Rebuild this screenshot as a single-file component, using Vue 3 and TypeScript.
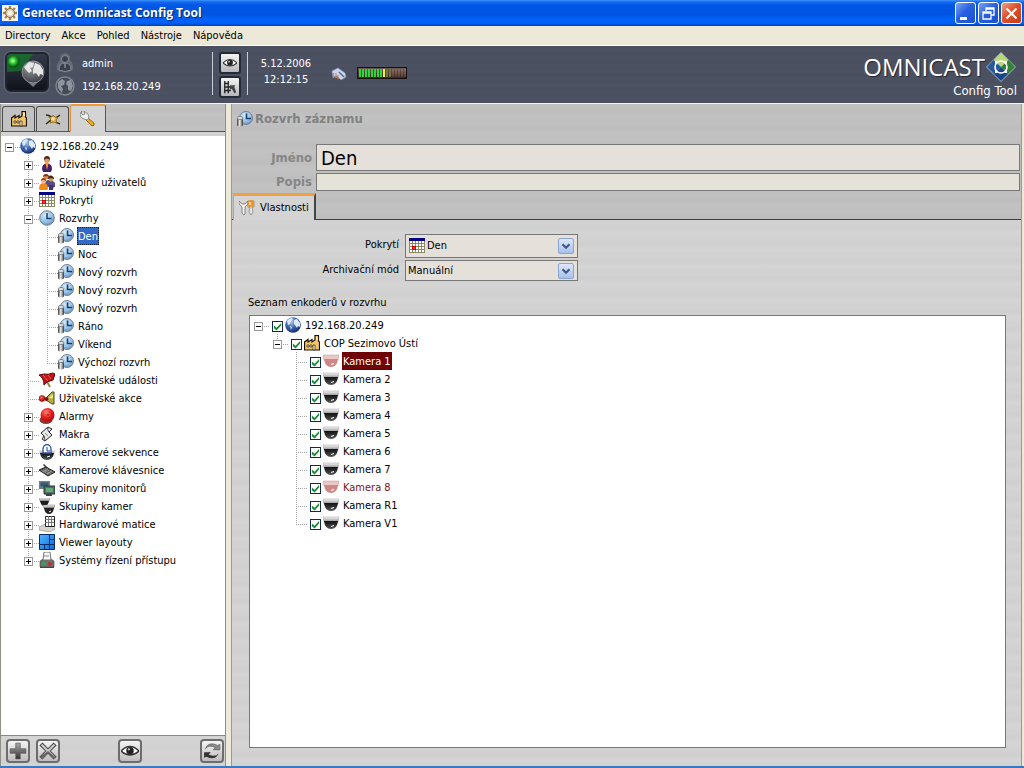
<script setup lang="ts">
import { computed, ref } from 'vue'

interface Node {
  text: string
  icon: string
  open?: boolean
  color?: string
  children?: Node[]
}
interface Row {
  text: string
  icon: string
  color: string
  level: number
  cells: string[]
  sign: string
}

const leaf = (text: string, icon: string, color = ''): Node => ({ text, icon, color })
const closed = (text: string, icon: string): Node => ({ text, icon, open: false, children: [] })

const directory: Node = {
  text: '192.168.20.249', icon: 'globe', open: true,
  children: [
    closed('Uživatelé', 'user'),
    closed('Skupiny uživatelů', 'users'),
    closed('Pokrytí', 'calendar'),
    {
      text: 'Rozvrhy', icon: 'clock', open: true,
      children: ['Den', 'Noc', 'Nový rozvrh', 'Nový rozvrh', 'Nový rozvrh', 'Ráno', 'Víkend', 'Výchozí rozvrh']
        .map((t) => leaf(t, 'schedule')),
    },
    leaf('Uživatelské události', 'flag'),
    leaf('Uživatelské akce', 'horn'),
    closed('Alarmy', 'alarm'),
    closed('Makra', 'macro'),
    closed('Kamerové sekvence', 'sequence'),
    closed('Kamerové klávesnice', 'keyboard'),
    closed('Skupiny monitorů', 'monitors'),
    closed('Skupiny kamer', 'domes'),
    closed('Hardwarové matice', 'matrix'),
    closed('Viewer layouty', 'layout'),
    closed('Systémy řízení přístupu', 'access'),
  ],
}

const encoders: Node = {
  text: '192.168.20.249', icon: 'globe', open: true,
  children: [
    {
      text: 'COP Sezimovo Ústí', icon: 'factory', open: true,
      children: ['1', '2', '3', '4', '5', '6', '7', '8', 'R1', 'V1'].map((n) => {
        const off = n === '1' || n === '8'
        return leaf(`Kamera ${n}`, off ? 'domeoff' : 'dome', off ? '#7d1416' : '')
      }),
    },
  ],
}

function flatten(node: Node, prefix: string[] = [], own = 'root'): Row[] {
  const row: Row = {
    text: node.text,
    icon: node.icon,
    color: node.color || '',
    level: prefix.length,
    cells: [...prefix, own],
    sign: node.children ? (node.open ? 'minus' : 'plus') : '',
  }
  const kids = node.open && node.children ? node.children : []
  const next = [...prefix, own === 'tee' ? 'pass' : 'blank']
  return [row, ...kids.flatMap((k, i) => flatten(k, next, i === kids.length - 1 ? 'end' : 'tee'))]
}

const treeRows = computed(() => flatten(directory))
const encoderRows = computed(() => flatten(encoders))
const selected = ref(5)
const selectedEncoder = ref(2)
const name = ref('Den')
const description = ref('')
const menus = ['Directory', 'Akce', 'Pohled', 'Nástroje', 'Nápověda']
</script>

<template>
  <svg class="defs" aria-hidden="true">
    <defs>
      <radialGradient id="gGlobe" cx=".4" cy=".3" r=".75"><stop offset="0" stop-color="#a9c4ea" /><stop offset=".5" stop-color="#3c66b0" /><stop offset="1" stop-color="#12265e" /></radialGradient>
      <radialGradient id="gClock" cx=".4" cy=".3" r=".8"><stop offset="0" stop-color="#d5ebfb" /><stop offset=".6" stop-color="#8fbfe6" /><stop offset="1" stop-color="#5580b0" /></radialGradient>
      <radialGradient id="gRed" cx=".4" cy=".3" r=".8"><stop offset="0" stop-color="#ff8070" /><stop offset=".5" stop-color="#e01c1c" /><stop offset="1" stop-color="#a00808" /></radialGradient>
      <linearGradient id="gCyl"><stop offset="0" stop-color="#333" /><stop offset=".45" stop-color="#eee" /><stop offset="1" stop-color="#333" /></linearGradient>
      <linearGradient id="gDome" x2="0" y2="1"><stop offset="0" stop-color="#111" /><stop offset="1" stop-color="#555" /></linearGradient>
      <linearGradient id="gCap" x2="0" y2="1"><stop offset="0" stop-color="#f8f8f8" /><stop offset="1" stop-color="#8a8a8a" /></linearGradient>
      <linearGradient id="gGrey" x2="0" y2="1"><stop offset="0" stop-color="#aaa" /><stop offset="1" stop-color="#333" /></linearGradient>
      <linearGradient id="gLay" x2="1" y2="1"><stop offset="0" stop-color="#4fb8ff" /><stop offset="1" stop-color="#0868d8" /></linearGradient>
    </defs>
    <symbol id="i-globe" viewBox="0 0 16 16"><circle cx="8" cy="8" r="7.8" fill="url(#gGlobe)" /><path d="M2 4q2-3 5-3l1 2-2 1-1 3-2 1zM9 3l3-1 3 4v4l-2-1-1 2-2-3-1-1zM5 9l2 1-1 3z" fill="#dfeaf8" /></symbol>
    <symbol id="i-user" viewBox="0 0 16 16"><path d="M3 13Q3 7.500 8 7.500T13 13l-1 3H4z" fill="#43206e" /><path d="M6.500 7.500L8 14l1.500-6.500z" fill="#ff9a1c" /><circle cx="8" cy="4" r="3" fill="#d99c62" /><path d="M5 4q-.3-4 3-4t3 4Q8 .8 5 4" fill="#4e2c14" /></symbol>
    <symbol id="i-users" viewBox="0 0 16 16"><path d="M6 9q0-3 4-3t6 3v4H7z" fill="#574d89" /><circle cx="7" cy="3" r="2.500" fill="#d58a50" /><path d="M4 3q0-3 3-3t3 3Q7 1 4 3" fill="#7b3512" /><circle cx="12" cy="5" r="2.500" fill="#d99c62" /><path d="M9 5q0-4 3-3.500T15 5q-3-1.500-6 0" fill="#4a2712" /><path d="M0 15q0-6 4.500-6T9 15l-1 1H1z" fill="#ee8a16" /><circle cx="4.500" cy="7" r="2.500" fill="#f0bb8c" /><path d="M2 7q0-3 2.500-3T7 7Q4 5 2 7" fill="#a33b10" /><path d="M10 11h5l-1 5h-4z" fill="#43396f" /></symbol>
    <symbol id="i-calendar" viewBox="0 0 16 16"><path fill="#fff" d="M0 3h16v12H0z" /><path d="M.5 3v12M3.500 3v12M6.500 3v12M9.500 3v12M12.500 3v12M15.500 3v12M0 5.500h16M0 8.500h16M0 11.500h16M0 14.500h16" stroke="#8c8a66" fill="none" /><path fill="#000080" d="M0 0h16v3H0z" /><path fill="#e00000" d="M3 8h4v4H3z" /><path fill="#fff" d="M4.500 9.500h1v1h-1z" /></symbol>
    <symbol id="i-clock" viewBox="0 0 16 16"><circle cx="8" cy="8" r="7.300" fill="url(#gClock)" stroke="#777f8b" /><path d="M8 3v5.500h4.500" fill="none" stroke="#1d3c66" stroke-width="1.500" /></symbol>
    <symbol id="i-schedule" viewBox="0 0 16 16"><circle cx="9" cy="7" r="6.500" fill="url(#gClock)" stroke="#77818e" /><path d="M9.500 2.500v5H14" fill="none" stroke="#1d3c66" stroke-width="1.600" /><path d="M0 7v7.500q3 2.300 6 0V7z" fill="url(#gCyl)" /><ellipse cx="3" cy="7" rx="3" ry="1.500" fill="#e4e4e4" stroke="#555" stroke-width=".6" /></symbol>
    <symbol id="i-flag" viewBox="0 0 16 16"><path d="M5 4l6 11" stroke="#8d8848" stroke-width="2" /><path d="M0 3l5-1q4 1 9-1l2 1-2 6-6 2-3 3Q5 6 0 3" fill="#c21218" stroke="#5c090b" /><path d="M4 3l5 6M9 3l3 4" stroke="#ec5d60" /></symbol>
    <symbol id="i-horn" viewBox="0 0 16 16"><path d="M7 8l6-6h2v12h-2L7 10z" fill="#b7b044" stroke="#4e4a10" /><path d="M9 8.500L14 4v4z" fill="#ece88d" /><circle cx="3" cy="8.500" r="3" fill="url(#gRed)" stroke="#6d0808" stroke-width=".6" /><circle cx="7.500" cy="9" r="2" fill="#7a140f" /></symbol>
    <symbol id="i-alarm" viewBox="0 0 16 16"><ellipse cx="7" cy="12" rx="6.500" ry="4" fill="#8a3838" /><circle cx="8.500" cy="7" r="7" fill="url(#gRed)" /><circle cx="9" cy="7" r="1.500" fill="#c41414" stroke="#f47f76" stroke-width=".5" /></symbol>
    <symbol id="i-macro" viewBox="0 0 16 16"><path d="M2 7l7-6 4 2-3 3 3 3-7 6-3-2 2-3z" fill="#e7e7e7" stroke="#222" /><path d="M9 1q-1 3 1 5M6 15q0-3-1-5" fill="none" stroke="#444" /><path d="M6 7l3 3" stroke="#888" /></symbol>
    <symbol id="i-dome" viewBox="0 0 16 16"><path d="M0 2h16l-1 5H1z" fill="url(#gCap)" stroke="#888" stroke-width=".4" /><path d="M1 6h14q-1 8-7 8T1 6" fill="url(#gDome)" /><path d="M8 11.500l3-1" stroke="#fff" stroke-width="1.300" /></symbol>
    <symbol id="i-domeoff" viewBox="0 0 16 16"><path d="M0 2h16l-1 5H1z" fill="#ecc8c4" stroke="#b89590" stroke-width=".5" /><path d="M1 6h14q-1 8-7 8T1 6" fill="#cf8888" /><path d="M8 11.500l3-1" stroke="#fff" stroke-width="1.300" /></symbol>
    <symbol id="i-sequence" viewBox="0 0 16 16"><path d="M0 6h16l-1 4H1z" fill="url(#gCap)" /><path d="M1 9h14q-1 7-7 7T1 9" fill="url(#gDome)" /><path d="M4 9V5a4 4.500 0 018 0v4z" fill="#fff" stroke="#2b50a5" stroke-width="1.300" /><path d="M8 3v4h3" fill="none" stroke="#243c80" /><path d="M8 13l3-1" stroke="#fff" /></symbol>
    <symbol id="i-keyboard" viewBox="0 0 16 16"><path d="M0 8l7-3 9 5-7 4z" fill="#565656" stroke="#222" /><path d="M4 7.500l8 4.500M6 6.500l8 4M2.500 8.500l7 4M4 10l5-3M8 12l5-3" stroke="#aaa" stroke-width=".7" /><path d="M7 6L4 3l1-1 4 4" fill="#333" /></symbol>
    <symbol id="i-monitors" viewBox="0 0 16 16"><path d="M0 1h11v8H0z" fill="#6e8082" /><path d="M1.500 2.500h8v4h-8z" fill="#2e5a7e" /><path d="M5 6h11v8H5z" fill="#58696a" stroke="#2c3838" /><path d="M7 8h7v4H7z" fill="#5fae76" /><path d="M7 14h6v2H7z" fill="#384444" /></symbol>
    <symbol id="i-domes" viewBox="0 0 16 16"><path d="M0 0h11l-1 3H1z" fill="url(#gCap)" stroke="#666" stroke-width=".4" /><path d="M1 3h9q-1 5-4.500 5T1 3" fill="#1c1c1c" /><path d="M4 7h12l-1 3H5z" fill="url(#gCap)" stroke="#555" stroke-width=".4" /><path d="M5 10h10q-1 6-5 6t-5-6" fill="#222" /><path d="M10 14l2-1" stroke="#fff" /></symbol>
    <symbol id="i-matrix" viewBox="0 0 16 16"><path d="M0 11l6-3h10v5l-5 3-11-2z" fill="#d8d4cc" stroke="#888" stroke-width=".6" /><path d="M6.500.5h9v10h-9z" fill="#fff" stroke="#222" /><path d="M9.500 0v10M12.500 0v10M6 3.500h9M6 6.500h9" stroke="#777" /></symbol>
    <symbol id="i-layout" viewBox="0 0 16 16"><path d="M.5.5h15v15H.5z" fill="url(#gLay)" stroke="#0b2b68" /><path d="M10.500 0v16M0 10.500h16M5.500 10v6M10 5.500h6" stroke="#0b2b68" /></symbol>
    <symbol id="i-access" viewBox="0 0 16 16"><path d="M1 9l3-2h8l3 2v6H1z" fill="#6c7070" stroke="#444" stroke-width=".6" /><path d="M5 0h6l1 8H4z" fill="#f8f8f8" stroke="#777" /><path d="M5 4h5" stroke="#888" /><circle cx="5" cy="12" r="2" fill="#3da24b" /><circle cx="11" cy="12" r="2" fill="#c92d2d" /><path d="M1 15.500h14" stroke="#444" /></symbol>
    <symbol id="i-factory" viewBox="0 0 16 16"><path d="M.5 15V7L4 4.500V7l4-2.500V7l3-2V.5h3.500V6l1 1v8z" fill="#f0c56a" stroke="#1a1204" stroke-width="1.200" /><path d="M3 10h2v2H3zM6 10h2v2H6zM9 10h2v5H9z" fill="#fff" stroke="#2a1c06" stroke-width=".7" /><path d="M12 2h2v3h-2z" fill="#ffe9a0" /></symbol>
    <symbol id="i-star" viewBox="0 0 16 16"><path d="M1 4q4 0 7 4t7 5M1 13l5-4 3-1 6-4" stroke="#2f2c16" stroke-width="1.500" fill="none" /><path d="M8 4l2 2 3 .5-2 2.500 1 3-4-1-3 1 1-3-2-3 3 0z" fill="#e2b23c" stroke="#7a5812" stroke-width=".7" /><circle cx="8" cy="8" r="1.800" fill="#ffe9a0" /></symbol>
    <symbol id="i-wrench" viewBox="0 0 16 16"><path d="M8 7l6 5q1 3-2 3L6 9z" fill="#f0ac1c" stroke="#775008" stroke-width=".8" /><path d="M2 0l-2 3q0 4 4 5l3 1 2-2-1-4-4-3 1 3-2 1-2-2z" fill="#f1f1f1" stroke="#777" stroke-width=".8" /></symbol>
    <symbol id="i-tools" viewBox="0 0 16 16"><path d="M0 1v3l3 3v6q1 3 3 1V7l3-3V1L6 4H3z" fill="#f3f3f3" stroke="#777" stroke-width=".9" /><path d="M9 1h6v6h-2l1 5-2 3-2-3 1-5H9z" fill="#e9e9e9" stroke="#777" stroke-width=".7" /><path d="M9 1q3-2 6 0v5q-3 2-6 0z" fill="#ee9428" /><path d="M10 2h2v3h-2z" fill="#ffd08a" /></symbol>
    <symbol id="i-eye" viewBox="0 0 16 16"><path d="M0 8q8-8 16 0-8 7-16 0" fill="#fff" stroke="#333" stroke-width="1.200" /><circle cx="8" cy="7.700" r="3.300" fill="#222" /><circle cx="7" cy="6.500" r="1" fill="#ccc" /></symbol>
    <symbol id="i-log" viewBox="0 0 16 16"><path d="M2 1v14M6 1v14M2 4h4M2 8h7M2 12h7" fill="none" stroke="#222" stroke-width="1.500" /><path d="M8 6h6l-1 2 2 6-2 1-3-5-2 1z" fill="#444" /></symbol>
    <symbol id="i-plus" viewBox="0 0 16 16"><path d="M6 1h4v5h5v4h-5v5H6v-5H1V6h5z" fill="url(#gGrey)" stroke="#555" stroke-width=".6" /></symbol>
    <symbol id="i-cross" viewBox="0 0 16 16"><path d="M3 1l5 5 5-5 2 2-5 5 5 5-2 2-5-5-5 5-2-2 5-5-5-5z" fill="#ccc" stroke="#444" stroke-width=".9" /><path d="M8 8l6 5-1 2-5-5-5 5-2-2z" fill="#666" /></symbol>
    <symbol id="i-refresh" viewBox="0 0 16 16"><path d="M2 6q3-4 9-1l-2 2h6V2l-2 1Q5-1 2 6" fill="#888" stroke="#555" stroke-width=".5" /><path d="M14 10q-3 4-9 1l2-2H1v5l2-1q8 4 11-3" fill="#333" /></symbol>
    <symbol id="i-app" viewBox="0 0 16 16"><path fill="#fdf6ea" d="M0 0h16v16H0z" /><path d="M8 1v14M1 8h14M3 3l10 10M13 3L3 13" stroke="#a8834c" stroke-width="2.400" /><circle cx="8" cy="8" r="4.500" fill="#d9cfc0" stroke="#8c6a44" /><circle cx="8" cy="8" r="2.500" fill="#fff6dc" /></symbol>
  </svg>

  <div class="window">
    <header class="titlebar">
      <svg class="i16"><use href="#i-app" /></svg>
      <h1>Genetec Omnicast Config Tool</h1>
      <button class="cap" aria-label="Minimize"><svg viewBox="0 0 19 19"><path d="M4 13h7v3H4z" fill="#fff" /></svg></button>
      <button class="cap" aria-label="Restore"><svg viewBox="0 0 19 19"><path d="M7 7V4h8v7h-3M7 5h8M4 8h8v7H4zM4 9h8" fill="none" stroke="#fff" stroke-width="1.300" /></svg></button>
      <button class="cap close" aria-label="Close"><svg viewBox="0 0 19 19"><path d="M4.500 4.500l10 10M14.500 4.500l-10 10" stroke="#fff" stroke-width="2.200" /></svg></button>
    </header>

    <nav class="menubar">
      <button v-for="m in menus" :key="m">{{ m }}</button>
    </nav>

    <section class="banner">
      <button class="connect" aria-label="Connect">
        <svg viewBox="0 0 40 36"><defs><radialGradient id="led" cx=".4" cy=".4"><stop offset="0" stop-color="#c8ffb8" /><stop offset=".5" stop-color="#28cf28" /><stop offset="1" stop-color="#0a5a18" /></radialGradient><radialGradient id="ball" cx=".4" cy=".25" r=".9"><stop offset="0" stop-color="#9a9ca0" /><stop offset="1" stop-color="#2c2f36" /></radialGradient></defs><path d="M0 0h26L14 17 0 18z" fill="#16762a" opacity=".75" /><circle cx="7" cy="8" r="6" fill="url(#led)" /><path d="M20 27h12l-6 6z" fill="#777b84" /><circle cx="26" cy="18" r="11" fill="url(#ball)" stroke="#8b8e95" /><path d="M17 13l5-5 5 1-1 4-3 1 2 3-3 2-3-3zM28 9l5 2 3 5v5l-3-1-1 3-3-4-3 1v-4z" fill="#e6e6e6" /></svg>
      </button>
      <dl class="session">
        <dt><svg viewBox="0 0 20 20"><path d="M10 0q6 1 5 7 4 4 3 10-8 5-16 0Q1 11 5 7 4 1 10 0" fill="#656a76" /><circle cx="10" cy="6" r="3.500" fill="#3b3f4b" stroke="#858a95" /><path d="M4 17q0-7 6-7t6 7q-6 3-12 0" fill="#3b3f4b" stroke="#858a95" /><path d="M10 10v5" stroke="#858a95" stroke-width="1.500" /></svg></dt>
        <dd>admin</dd>
        <dt><svg viewBox="0 0 20 20"><circle cx="10" cy="10" r="9" fill="#454a57" stroke="#80858f" stroke-width="1.500" /><path d="M3 6l4-3 3 2-1 4-3 1 2 3-1 4-4-5zM12 5l4-1 2 6-2 5-3-1v-4l-2-2z" fill="#8e939d" /></svg></dt>
        <dd>192.168.20.249</dd>
      </dl>
      <div class="quick">
        <button aria-label="View"><svg class="i16"><use href="#i-eye" /></svg></button>
        <button aria-label="Log"><svg class="i16"><use href="#i-log" /></svg></button>
      </div>
      <time class="now" datetime="2006-12-05T12:12:15">5.12.2006<br>12:12:15</time>
      <svg class="cpu" viewBox="0 0 16 14"><path d="M1 4l6-3 7 5 1 4-5 3-4-4-4 1z" fill="#ccd6ec" stroke="#8890b5" stroke-width=".7" /><path d="M8 5l5 5" stroke="#5868a0" stroke-width="1.500" /><path d="M2.500 6v5M5 6v5M7 8v4" stroke="#d98a50" stroke-width="1.300" /></svg>
      <div class="meter" role="img" aria-label="Load"><i v-for="n in 16" :key="n" :class="{ on: n < 9, mid: n === 9, low: n > 9 && n < 12 }"></i></div>
      <div class="brand">
        <div class="word">OMNICAST</div>
        <svg class="diamond" viewBox="0 0 32 32"><path d="M16 1l15 15-15 15L1 16z" fill="#a4b5c2" /><path d="M16 2l7 7-7 7-7-7z" fill="#b7d977" /><path d="M23.500 9l6.500 7-7 7-7-7z" fill="#338237" /><path d="M8.500 9l7.500 7-7 7L2 16z" fill="#275a9c" /><path d="M16 16l7 7-7 7-7-7z" fill="#17478b" /><circle cx="16" cy="16" r="6" fill="none" stroke="#fff" stroke-width="1.600" /><path d="M10 10h2.500v2.500H10zM19.500 10H22v2.500h-2.500zM10 19.500h2.500V22H10zM19.500 19.500H22V22h-2.500z" fill="#fff" /></svg>
        <div class="product">Config Tool</div>
      </div>
    </section>

    <main class="work">
      <aside class="side">
        <div class="tabs" role="tablist">
          <button role="tab" aria-label="Physical"><svg class="i16"><use href="#i-factory" /></svg></button>
          <button role="tab" aria-label="Logical"><svg class="i16"><use href="#i-star" /></svg></button>
          <button role="tab" aria-label="Settings" class="active"><svg class="i16"><use href="#i-wrench" /></svg></button>
        </div>
        <div class="tree" role="tree">
          <div v-for="(r, i) in treeRows" :key="i" class="row" role="treeitem" :aria-level="r.level + 1" @click="selected = i">
            <span v-for="(c, k) in r.cells" :key="k" class="cell" :class="c">
              <button v-if="r.sign && k === r.level" class="sign" :class="r.sign" :aria-label="r.text"></button>
            </span>
            <svg class="i16"><use :href="'#i-' + r.icon" /></svg>
            <span class="text" :class="{ picked: i === selected }">{{ r.text }}</span>
          </div>
        </div>
        <div class="tools">
          <div class="pair">
            <button aria-label="Add"><svg><use href="#i-plus" /></svg></button>
            <button aria-label="Delete"><svg><use href="#i-cross" /></svg></button>
          </div>
          <button aria-label="Show"><svg><use href="#i-eye" /></svg></button>
          <button aria-label="Refresh"><svg><use href="#i-refresh" /></svg></button>
        </div>
      </aside>

      <section class="page">
        <div class="head">
          <h2><svg class="i16"><use href="#i-schedule" /></svg>Rozvrh záznamu</h2>
          <label for="name">Jméno</label>
          <input id="name" v-model="name" class="big" type="text">
          <label for="desc">Popis</label>
          <input id="desc" v-model="description" type="text">
        </div>
        <div class="subtabs" role="tablist">
          <button role="tab"><svg class="i16"><use href="#i-tools" /></svg>Vlastnosti</button>
        </div>
        <div class="body">
          <div class="fields">
            <label for="cover">Pokrytí</label>
            <div class="combo iconic">
              <select id="cover"><option>Den</option></select>
              <svg class="i16 lead"><use href="#i-calendar" /></svg>
              <svg class="drop" viewBox="0 0 16 16"><path d="M4 6l4 4 4-4" /></svg>
            </div>
            <label for="mode">Archivační mód</label>
            <div class="combo">
              <select id="mode"><option>Manuální</option></select>
              <svg class="drop" viewBox="0 0 16 16"><path d="M4 6l4 4 4-4" /></svg>
            </div>
          </div>
          <h3>Seznam enkoderů v rozvrhu</h3>
          <div class="tree framed" role="tree">
            <div v-for="(r, i) in encoderRows" :key="i" class="row" role="treeitem" :aria-level="r.level + 1">
              <span v-for="(c, k) in r.cells" :key="k" class="cell" :class="c">
                <button v-if="r.sign && k === r.level" class="sign" :class="r.sign" :aria-label="r.text"></button>
              </span>
              <input :id="'enc' + i" type="checkbox" checked>
              <svg class="i16"><use :href="'#i-' + r.icon" /></svg>
              <label :for="'enc' + i" class="text" :class="{ chosen: i === selectedEncoder, offline: r.color && i !== selectedEncoder }">{{ r.text }}</label>
            </div>
          </div>
        </div>
      </section>
    </main>
  </div>
</template>

<style>
html, body, #app { height: 100%; margin: 0; }
</style>

<style scoped>
.window, .window * { box-sizing: border-box; }
.window {
  display: flex; flex-direction: column; min-height: 100vh;
  background: #ece9d8; border-bottom: 2px solid #3a78c2; color: #000;
  font: 11px/18px "DejaVu Sans Condensed", "DejaVu Sans", "Noto Sans", sans-serif;
}
button, input, select { font: inherit; color: inherit; margin: 0; padding: 0; border: 0; background: none; border-radius: 0; }
h1, h2, h3, dl, dd { margin: 0; }
svg { display: block; flex: none; }
.defs { width: 0; height: 0; position: absolute; }
.i16 { width: 16px; height: 16px; }

.titlebar {
  display: flex; align-items: center; gap: 2px; height: 26px; padding: 0 2px;
  background: linear-gradient(#3c95ff 0, #1668ee 2px, #0058e6 5px, #0054e0 14px, #0063fc 20px, #0060f8 23px, #0040b4 26px);
}
.titlebar h1 { flex: 1; padding-left: 2px; font: bold 12px/18px "Open Sans", "Noto Sans", sans-serif; color: #fff; text-shadow: 1px 1px 1px #0a246a; }
.cap { width: 21px; height: 22px; border: 1px solid #fff; border-radius: 3px; background: linear-gradient(135deg, #7ba4f4, #2a61e0 45%, #1c4fd0); }
.cap.close { background: linear-gradient(135deg, #f0a088, #e0502c 45%, #c43c14); }
.cap svg { width: 19px; height: 19px; }

.menubar { display: flex; gap: 11px; height: 20px; padding: 0 5px; border-bottom: 1px solid #fff; }

.banner {
  display: flex; align-items: flex-start; height: 58px; padding: 5px 7px 0 5px; border-bottom: 1px solid #f4f4f0; color: #fff;
  background: repeating-linear-gradient(#4b5061 0, #4b5061 2px, #4d5263 4px, #4b5061 7px);
}
.connect { width: 44px; height: 40px; margin-top: 1px; overflow: hidden; border: 2px solid #20242f; border-radius: 6px; background: linear-gradient(#343a4a, #10131c); box-shadow: 0 0 1px 1px #636978; }
.connect svg { width: 40px; height: 36px; }
.session { display: grid; grid-template-columns: 20px 1fr; column-gap: 7px; row-gap: 2px; width: 157px; padding-left: 6px; margin-top: 2px; line-height: 21px; }
.session svg { width: 20px; height: 20px; }
.quick { display: flex; flex-direction: column; gap: 2px; width: 36px; height: 43px; margin: 1px 0 0 6px; padding: 0 6px; border: solid #c9ccd4; border-width: 0 1px; }
.quick button { display: grid; place-items: center; flex: none; width: 22px; height: 22px; border: 2px solid #252a38; border-radius: 3px; background: linear-gradient(#f4f4f4, #b4b6ba); }
.quick .i16 { width: 14px; height: 14px; }
.now { width: 76px; margin-top: 5px; text-align: center; line-height: 16px; }
.cpu { width: 16px; height: 14px; margin: 16px 10px 0 7px; }
.meter { display: flex; gap: 1px; width: 50px; height: 12px; margin-top: 16px; padding: 1px; overflow: hidden; border: 1px solid #17120f; background: linear-gradient(#6a5a50, #3a2420); }
.meter i { flex: none; width: 2px; background: linear-gradient(#8a7066, #5a3a36); }
.meter .on { background: #2bd83a; }
.meter .mid { background: #f3f03a; }
.meter .low { background: #6d7548; }
.brand { display: grid; grid-template-columns: auto 32px; align-items: center; margin-left: auto; }
.word { font: 400 24px/32px "Open Sans", Lato, sans-serif; text-shadow: 1px 1px 1px #20242f; }
.diamond { width: 32px; height: 32px; }
.product { grid-column: 1 / 3; justify-self: end; font-size: 13px; line-height: 16px; }

.work { flex: 1; display: flex; }
.side { display: flex; flex-direction: column; width: 226px; border: solid #8f8f88; border-width: 0 1px; background: repeating-linear-gradient(#d3d3d3 0, #d3d3d3 3px, #d0d0d0 6px, #d5d5d5 11px, #d3d3d3 13px); }
.tabs { display: flex; align-items: flex-end; gap: 1px; height: 28px; padding-left: 1px; border-bottom: 1px solid #555; background: repeating-linear-gradient(#c0c0c0 0, #c0c0c0 3px, #bebebe 6px, #c3c3c3 11px, #c0c0c0 13px); }
.tabs button { display: grid; place-items: center; width: 33px; height: 25px; border: 1px solid #4c4c4c; border-bottom: 0; border-radius: 3px 3px 0 0; background: #c2c2c2; }
.tabs .active { width: 36px; height: 28px; margin-bottom: -1px; border-color: #dc9240 #555 #555 #dc9240; border-top: 2px solid #f09a34; background: #d4d4d4; }
.tree { flex: 1; margin-top: 4px; padding-top: 1px; background: #fff; }
.row { display: flex; align-items: flex-start; height: 18px; white-space: nowrap; }
.row > .i16 { margin-top: 1px; }
.cell {
  display: flex; flex: none; width: 19px; height: 18px; padding: 6px 0 0 4px;
  --v: repeating-linear-gradient(#a4a4a4 0 1px, transparent 1px 2px) 8px 0;
  --h: repeating-linear-gradient(90deg, #a4a4a4 0 1px, transparent 1px 2px) 8px 10px / 11px 1px no-repeat;
}
.root { background: var(--h); }
.pass { background: var(--v) / 1px 18px no-repeat; }
.tee { background: var(--h), var(--v) / 1px 18px no-repeat; }
.end { background: var(--h), var(--v) / 1px 11px no-repeat; }
.sign { width: 9px; height: 9px; border: 1px solid #999; background: linear-gradient(#000, #000) 1px 3px / 5px 1px no-repeat, #fff; }
.sign.plus { background: linear-gradient(#000, #000) 1px 3px / 5px 1px no-repeat, linear-gradient(#000, #000) 3px 1px / 1px 5px no-repeat, #fff; }
.text { height: 18px; margin-left: 3px; padding: 0 1px; line-height: 20px; }
.picked { color: #fff; background: #316ac5; outline: 1px dotted #102040; outline-offset: -1px; }
.offline { color: #7d1416; }
.chosen { color: #fff; background: #6e0204; }
.tools { display: flex; justify-content: space-between; height: 31px; padding: 3px 1px 0 5px; border-top: 1px solid #888; }
.pair { display: flex; gap: 6px; }
.tools button { display: grid; place-items: center; width: 24px; height: 24px; border: 2px solid #6d6d6d; border-radius: 4px; background: linear-gradient(#f4f4f4, #bdbdbd); }
.tools svg { width: 18px; height: 18px; }

.page { flex: 1; display: flex; flex-direction: column; min-width: 0; margin: 0 2px 0 5px; border: solid #9a9a94; border-width: 0 1px; }
.head {
  display: grid; grid-template-columns: 80px 1fr; column-gap: 4px; row-gap: 2px; align-items: center; padding: 6px 1px 2px 0;
  background: repeating-linear-gradient(#c0c0c0 0, #c0c0c0 3px, #bdbdbd 7px, #c2c2c2 13px, #c0c0c0 17px);
}
.head h2 { grid-column: 1 / 3; display: flex; align-items: center; gap: 2px; height: 18px; margin-bottom: 14px; padding-left: 5px; font: bold 13px/18px "DejaVu Sans Condensed", sans-serif; color: #808080; }
.head label { text-align: right; font: bold 13px/18px "DejaVu Sans Condensed", sans-serif; color: #868686; }
.head input { width: 100%; height: 18px; padding: 0 4px; border: 1px solid #777; background: #e5e2d8; }
.head .big { height: 27px; font-size: 20px; background: #e5e0da; }
.subtabs { display: flex; height: 27px; border-bottom: 1px solid #3c3c3c; background: repeating-linear-gradient(#c0c0c0 0, #c0c0c0 3px, #bdbdbd 7px, #c2c2c2 13px, #c0c0c0 17px); }
.subtabs button { display: flex; align-items: center; gap: 5px; height: 27px; margin-left: 1px; padding: 0 5px; border: 1px solid #e0a050; border-top: 3px solid #f0a040; border-right: 2px solid #444; border-bottom: 0; background: #d4d4d4; }
.body { flex: 1; display: flex; flex-direction: column; padding: 14px 15px 18px 16px; background: repeating-linear-gradient(#d2d2d2 0, #d2d2d2 3px, #cfcfcf 7px, #d5d5d5 13px, #d2d2d2 17px); }
.fields { display: grid; grid-template-columns: 151px 173px; column-gap: 6px; row-gap: 2px; align-items: center; }
.fields > label { padding-bottom: 2px; text-align: right; }
.combo { display: grid; grid-template-columns: 1fr 22px; align-items: center; height: 21px; border: 1px solid #777; background: #e5e0da; }
.combo.iconic { height: 24px; }
.combo select { grid-area: 1 / 1 / 2 / 3; height: 100%; padding-left: 2px; appearance: none; outline: 0; }
.combo.iconic select { padding-left: 21px; }
.lead { grid-area: 1 / 1; margin-left: 3px; pointer-events: none; }
.drop { grid-area: 1 / 2; justify-self: center; width: 16px; height: 16px; border: 1px solid #8aa4d4; border-radius: 2px; background: linear-gradient(#dbe7fc, #a9c0ee); pointer-events: none; }
.drop path { fill: none; stroke: #44597f; stroke-width: 2.500; }
.body h3 { margin-top: 13px; font-size: 11px; font-weight: normal; line-height: 18px; }
.framed { margin: 3px 0 0 1px; padding-top: 0; border: 1px solid #777; }
.framed input { appearance: none; flex: none; width: 11px; height: 11px; margin: 5px 2px 0 3px; border: 1px solid #15294a; background: #fff; }
.framed input:checked::before { content: ""; display: block; width: 9px; height: 9px; background: #1f8a35; clip-path: polygon(10% 40%, 40% 65%, 90% 10%, 90% 40%, 40% 95%, 10% 70%); }
</style>
